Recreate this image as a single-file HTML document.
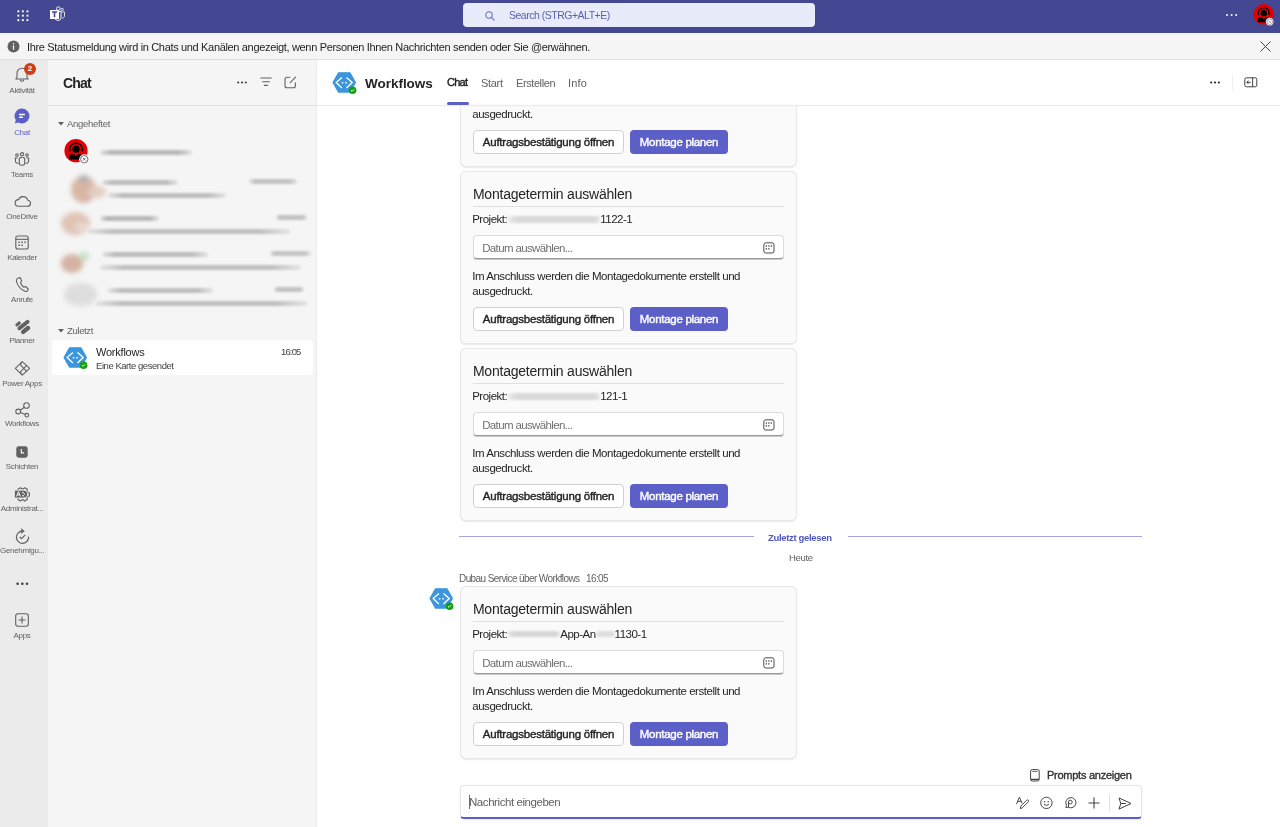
<!DOCTYPE html>
<html><head><meta charset="utf-8">
<style>
*{box-sizing:border-box;margin:0;padding:0}
html,body{width:1280px;height:827px;overflow:hidden;background:#fff;font-family:"Liberation Sans",sans-serif;color:#242424}
.t,.card,.lbl{will-change:transform}
.a{position:absolute}
#top{left:0;top:0;width:1280px;height:33px;background:#444791}
#search{left:463px;top:3px;width:352px;height:24px;background:#e8ebfa;border-radius:4px}
#banner{left:0;top:33px;width:1280px;height:27px;background:#f5f5f5;border-bottom:1px solid #e0e0e0}
#rail{left:0;top:60px;width:48px;height:767px;background:#ebebeb}
#list{left:48px;top:60px;width:269px;height:767px;background:#f5f5f5;border-right:1px solid #ebebeb;box-shadow:0.5px 0 1.5px rgba(0,0,0,0.05)}
#main{left:317px;top:60px;width:963px;height:767px;background:#fff}
.lbl{position:absolute;left:0;width:44px;text-align:center;font-size:8px;color:#616161;white-space:nowrap;letter-spacing:-0.3px}
.ri{position:absolute;left:12px;width:24px;height:24px}
.t{position:absolute;white-space:nowrap}
.card{position:absolute;left:460px;width:337px;background:#fafafa;border:1px solid #e8e8e8;border-radius:6px;box-shadow:0 0.6px 1.2px rgba(0,0,0,0.09)}
.card .ttl{position:absolute;left:11.9px;top:13.8px;font-size:14px;letter-spacing:-0.219px;color:#242424}
.card .sep{position:absolute;left:12px;right:12px;top:34px;height:1px;background:#e0e0e0}
.card .proj{position:absolute;left:11.2px;top:41.0px;font-size:11.5px;letter-spacing:-0.497px;color:#242424}
.card .inp{position:absolute;left:12px;right:12px;top:63px;height:24px;background:#fff;border:1px solid #dcdcdc;border-bottom:1px solid #9a9a9a;border-radius:4px;box-shadow:0 1px 0 #c8c8c8}
.card .inp span{position:absolute;left:8.2px;top:5.9px;font-size:11.5px;letter-spacing:-0.639px;color:#707070}
.card .desc{position:absolute;left:11.2px;top:97.2px;font-size:11.5px;line-height:15px;letter-spacing:-0.446px;color:#242424}
.card .b1{position:absolute;left:12px;top:134.8px;width:151px;height:24px;background:#fff;border:1px solid #d1d1d1;border-radius:4px;font-size:11.5px;font-weight:400;-webkit-text-stroke:0.4px #242424;letter-spacing:-0.224px;text-align:center;line-height:22px;color:#242424}
.card .b2{position:absolute;left:169px;top:134.8px;width:98px;height:24px;background:#5b5fc7;border-radius:4px;font-size:11.5px;font-weight:400;-webkit-text-stroke:0.4px #fff;letter-spacing:-0.297px;text-align:center;line-height:24px;color:#fff}
</style></head>
<body>
<div id="top" class="a">
<svg class="a" style="left:16.5px;top:9.8px" width="12" height="12" viewBox="0 0 12 12" fill="#fff"><rect x="0.4" y="0.4" width="1.9" height="1.9"/><rect x="4.9" y="0.4" width="1.9" height="1.9"/><rect x="9.5" y="0.4" width="1.9" height="1.9"/><rect x="0.4" y="4.7" width="1.9" height="1.9"/><rect x="4.9" y="4.7" width="1.9" height="1.9"/><rect x="9.5" y="4.7" width="1.9" height="1.9"/><rect x="0.4" y="9.2" width="1.9" height="1.9"/><rect x="4.9" y="9.2" width="1.9" height="1.9"/><rect x="9.5" y="9.2" width="1.9" height="1.9"/></svg>
<svg class="a" style="left:49px;top:6.2px" width="17" height="16" viewBox="0 0 17 16"><circle cx="9.3" cy="2.6" r="1.8" fill="none" stroke="#fff" stroke-width="0.9"/><circle cx="13.2" cy="3.5" r="1.2" fill="none" stroke="#fff" stroke-width="0.8"/><path d="M7.5 5.5h4.5v6a3 3 0 0 1-6 0" fill="none" stroke="#fff" stroke-width="0.9"/><path d="M12.5 6h3v4.2a2 2 0 0 1-3 1.5" fill="none" stroke="#fff" stroke-width="0.8"/><rect x="1" y="4" width="9" height="9" fill="#fff"/><path d="M3 6h5M5.5 6v5.2" stroke="#444791" stroke-width="1.6"/></svg>
<svg class="a" style="left:1224.5px;top:13px" width="14" height="4" viewBox="0 0 14 4" fill="#fff"><circle cx="2" cy="2" r="1"/><circle cx="6.6" cy="2" r="1"/><circle cx="11.2" cy="2" r="1"/></svg>
<svg class="a" style="left:1252.5px;top:4.2px" width="21.5" height="21.5" viewBox="0 0 24 24"><defs><clipPath id="cav2"><circle cx="12" cy="11.7" r="11.6"/></clipPath></defs><circle cx="12" cy="11.7" r="11.6" fill="#e30000"/><g clip-path="url(#cav2)"><circle cx="12" cy="10.2" r="3.6"/><path d="M5.6 10.6A6.4 6.4 0 0 1 18.4 10.6" fill="none" stroke="#000" stroke-width="1.3"/><ellipse cx="5.8" cy="10.8" rx="1.1" ry="1.8"/><ellipse cx="18.2" cy="10.8" rx="1.1" ry="1.8"/><path d="M5 20.4V17.6Q5 15.2 7.8 15.2H10.2L12 17.2 13.8 15.2H16.2Q19 15.2 19 17.6V20.4Z"/></g></svg>
<svg class="a" style="left:1264.5px;top:17px" width="9.5" height="9.5" viewBox="0 0 10.5 10.5"><circle cx="5.25" cy="5.25" r="5.1" fill="#444791"/><circle cx="5.25" cy="5.25" r="4.1" fill="#fff"/><circle cx="5.25" cy="5.25" r="3.1" fill="#fff" stroke="#8a8a8a" stroke-width="0.9"/><path d="M4.1 4.1l2.3 2.3M6.4 4.1l-2.3 2.3" stroke="#8a8a8a" stroke-width="0.9"/></svg>
</div>
<div id="search" class="a">
<svg class="a" style="left:22px;top:8px" width="10" height="10" viewBox="0 0 10 10"><circle cx="4" cy="4" r="3.2" fill="none" stroke="#6b6fc4" stroke-width="1.1"/><path d="M6.4 6.4L9.2 9.2" stroke="#6b6fc4" stroke-width="1.2" stroke-linecap="round"/></svg>
<div class="t" style="left:46px;top:6px;font-size:10.5px;letter-spacing:-0.494px;color:#5b5fae">Search (STRG+ALT+E)</div>
</div>
<div id="banner" class="a">
<svg class="a" style="left:7px;top:7px" width="13" height="13" viewBox="0 0 13 13"><circle cx="6.5" cy="6.5" r="6" fill="#616161"/><rect x="5.9" y="5.4" width="1.2" height="4.3" fill="#fff"/><circle cx="6.5" cy="3.8" r="0.75" fill="#fff"/></svg>
<div class="t" style="left:27px;top:8px;font-size:11px;letter-spacing:-0.335px;color:#242424">Ihre Statusmeldung wird in Chats und Kanälen angezeigt, wenn Personen Ihnen Nachrichten senden oder Sie @erwähnen.</div>
<svg class="a" style="left:1260px;top:8px" width="11" height="11" viewBox="0 0 11 11"><path d="M0.5 0.5l10 10M10.5 0.5l-10 10" stroke="#424242" stroke-width="1"/></svg>
</div>
<div id="rail" class="a">
<svg class="a" style="left:15px;top:7px" width="14" height="15" viewBox="0 0 14 15"><path d="M2 10.5V6.2a5 5 0 0 1 10 0v4.3l1.2 1.5H0.8z" fill="none" stroke="#616161" stroke-width="1.1" stroke-linejoin="round"/><path d="M5.2 12.4a1.8 1.8 0 0 0 3.6 0" fill="none" stroke="#616161" stroke-width="1.1"/></svg>
<div class="lbl" style="top:25.9px;color:#616161">Aktivität</div>
<svg class="a" style="left:14px;top:48px" width="16" height="16" viewBox="0 0 16 16"><path d="M8 0.5a7.5 7.5 0 1 1-3.6 14.1L0.8 15.5l1-3.4A7.5 7.5 0 0 1 8 0.5z" fill="#5b5fc7"/><rect x="5" y="5.8" width="6" height="1.4" rx="0.5" fill="#fff"/><rect x="5" y="8.6" width="4" height="1.4" rx="0.5" fill="#fff"/></svg>
<div class="lbl" style="top:68.0px;color:#5b5fc7">Chat</div>
<svg class="a" style="left:14px;top:92px" width="16" height="14" viewBox="0 0 16 14" fill="none" stroke="#616161" stroke-width="1.1"><circle cx="8" cy="2.2" r="1.6"/><circle cx="3" cy="3" r="1.3"/><circle cx="13" cy="3" r="1.3"/><rect x="5.3" y="5.3" width="5.4" height="8" rx="2.2"/><path d="M3.8 6H1.4v3a2.3 2.3 0 0 0 3 2.2"/><path d="M12.2 6h2.4v3a2.3 2.3 0 0 1-3 2.2"/></svg>
<div class="lbl" style="top:110.0px;color:#616161">Teams</div>
<svg class="a" style="left:14px;top:135px" width="17" height="12" viewBox="0 0 17 12"><path d="M4.3 11.2h9a3 3 0 0 0 0.4-6A4.8 4.8 0 0 0 4.6 4.6 3.3 3.3 0 0 0 4.3 11.2z" fill="none" stroke="#616161" stroke-width="1.1" stroke-linejoin="round"/></svg>
<div class="lbl" style="top:151.5px;color:#616161">OneDrive</div>
<svg class="a" style="left:15px;top:175px" width="14" height="15" viewBox="0 0 14 15"><rect x="0.8" y="1" width="12.4" height="13" rx="2" fill="none" stroke="#616161" stroke-width="1.1"/><path d="M0.8 4.3h12.4" stroke="#616161" stroke-width="1.1"/><g fill="#616161"><rect x="3.3" y="6.5" width="1.5" height="1.5"/><rect x="6.3" y="6.5" width="1.5" height="1.5"/><rect x="9.3" y="6.5" width="1.5" height="1.5"/><rect x="3.3" y="9.5" width="1.5" height="1.5"/><rect x="6.3" y="9.5" width="1.5" height="1.5"/></g></svg>
<div class="lbl" style="top:192.9px;color:#616161">Kalender</div>
<svg class="a" style="left:15px;top:217px" width="14" height="15" viewBox="0 0 14 15"><path d="M3.3 1l1.8-0.4 1.6 3.4-1.2 1.5c0.6 1.8 1.8 3.6 3.4 4.8l1.7-0.9 2.6 2.6-0.6 1.6c-0.4 0.7-1.4 1.1-2.3 0.8C5.8 13 2.1 8.2 1.4 4 1.3 2.6 2.1 1.4 3.3 1z" fill="none" stroke="#616161" stroke-width="1.1" stroke-linejoin="round"/></svg>
<div class="lbl" style="top:235.0px;color:#616161">Anrufe</div>
<svg class="a" style="left:12px;top:256px" width="22" height="22" viewBox="0 0 22 22" stroke="#616161" stroke-linecap="round" fill="none"><path d="M4.9 8.9L7.3 6.9" stroke-width="3.1"/><path d="M7.4 12.3L15.6 5.7" stroke-width="3.9"/><path d="M11.2 15.9L16 12" stroke-width="4.4"/></svg>
<div class="lbl" style="top:276.3px;color:#616161">Planner</div>
<svg class="a" style="left:12px;top:298px" width="22" height="22" viewBox="0 0 22 22" fill="none" stroke="#616161" stroke-width="1.1" stroke-linejoin="round"><path d="M3.3 10.4L10.3 3.6 17.6 10.4 10.3 17.2z"/><path d="M9.6 3.9L8.6 7.2 14.9 13.6M9.6 16.9L8.6 13.6 14.9 7.2"/></svg>
<div class="lbl" style="top:318.6px;color:#616161">Power Apps</div>
<svg class="a" style="left:15px;top:342px" width="16" height="16" viewBox="0 0 16 16" fill="none" stroke="#616161" stroke-width="1.1"><circle cx="11.5" cy="3.5" r="2.8"/><circle cx="3.2" cy="9.5" r="2.4"/><circle cx="11.8" cy="13.2" r="1.8"/><path d="M5.4 8.2L9.2 5.2M5.5 10.5l4.6 2"/></svg>
<div class="lbl" style="top:359.2px;color:#616161">Workflows</div>
<svg class="a" style="left:16px;top:386px" width="12" height="12" viewBox="0 0 12 12"><rect x="0.3" y="0.3" width="11.4" height="11.4" rx="2.4" fill="#616161"/><path d="M5.3 3v3.8h2.8" fill="none" stroke="#fff" stroke-width="1.2"/></svg>
<div class="lbl" style="top:402.0px;color:#616161">Schichten</div>
<svg class="a" style="left:12px;top:424px" width="22" height="22" viewBox="0 0 22 22"><path d="M15.86 12.32 L17.42 11.97 L17.42 8.83 L15.86 8.48 L14.89 6.80 L15.37 5.28 L12.65 3.71 L11.57 4.89 L9.63 4.89 L8.55 3.71 L5.83 5.28 L6.31 6.80 L5.34 8.48 L3.78 8.83 L3.78 11.97 L5.34 12.32 L6.31 14.00 L5.83 15.52 L8.55 17.09 L9.63 15.91 L11.57 15.91 L12.65 17.09 L15.37 15.52 L14.89 14.00Z" fill="none" stroke="#616161" stroke-width="1.1" stroke-linejoin="round"/><path d="M2.4 6.2h9.4a3.9 3.9 0 0 1 0 7.8H2.4z" fill="#616161" stroke="#ebebeb" stroke-width="0.9"/><path d="M4.6 12.4L6.5 7.6 8.4 12.4M5.3 10.9h2.4" fill="none" stroke="#fff" stroke-width="1"/><rect x="10.3" y="8" width="1.4" height="1.4" fill="#fff"/><rect x="10.3" y="11" width="1.4" height="1.4" fill="#fff"/><rect x="11.9" y="9.5" width="1" height="1.3" fill="#fff"/></svg>
<div class="lbl" style="top:444.3px;color:#616161">Administrat...</div>
<svg class="a" style="left:12px;top:465px" width="22" height="22" viewBox="0 0 22 22" fill="none" stroke="#616161" stroke-width="1.2" stroke-linecap="round" stroke-linejoin="round"><path d="M10.2 6.1A6.1 6.1 0 1 0 16.6 12.2"/><path d="M9.6 3.9L12.3 6.1 9.6 8.3z" fill="#616161" stroke-width="0.6"/><path d="M8.1 12.2l1.5 1.4 3.2-3.3"/></svg>
<div class="lbl" style="top:485.8px;color:#616161">Genehmigu...</div>
<svg class="a" style="left:16px;top:522px" width="13" height="4" viewBox="0 0 13 4" fill="#424242"><circle cx="1.6" cy="1.8" r="1.3"/><circle cx="6.3" cy="1.8" r="1.3"/><circle cx="11" cy="1.8" r="1.3"/></svg>
<svg class="a" style="left:15px;top:553px" width="14" height="14" viewBox="0 0 14 14" fill="none" stroke="#616161" stroke-width="1.1"><rect x="0.7" y="0.7" width="12.6" height="12.6" rx="2.2"/><path d="M7 3.6v6.8M3.6 7h6.8"/></svg>
<div class="lbl" style="top:570.6px">Apps</div>
<div class="a" style="left:24px;top:3px;width:12px;height:12px;border-radius:50%;background:#d13d12;color:#fff;font-size:8px;font-weight:700;text-align:center;line-height:12px">2</div>
</div>
<div id="list" class="a">
<div class="t" style="left:15px;top:15px;font-size:14px;font-weight:700;letter-spacing:-0.836px;color:#242424">Chat</div>
<svg class="a" style="left:189px;top:21px" width="10" height="3" viewBox="0 0 10 3" fill="#424242"><circle cx="1.2" cy="1.5" r="1.1"/><circle cx="5" cy="1.5" r="1.1"/><circle cx="8.8" cy="1.5" r="1.1"/></svg>
<svg class="a" style="left:212px;top:17px" width="12" height="10" viewBox="0 0 12 10" stroke="#616161" stroke-width="1.1" stroke-linecap="round"><path d="M0.8 1h10.4M2.6 4.7h6.8M4.4 8.4h3.2"/></svg>
<svg class="a" style="left:236px;top:16px" width="13" height="13" viewBox="0 0 13 13" fill="none" stroke="#616161" stroke-width="1.1" stroke-linecap="round" stroke-linejoin="round"><path d="M6 1.3H3A2 2 0 0 0 1 3.3v6.4a2 2 0 0 0 2 2h6.4a2 2 0 0 0 2-2V6.8"/><path d="M11.6 1.2L6.2 6.6"/></svg>
<div class="a" style="left:0;top:45px;width:268px;height:1px;background:#e0e0e0"></div>
<svg class="a" style="left:9.5px;top:62px" width="6" height="4" viewBox="0 0 6 4"><path d="M0 0h6L3 3.5z" fill="#616161"/></svg>
<div class="t" style="left:19px;top:57.5px;font-size:9.5px;letter-spacing:-0.296px;color:#616161">Angeheftet</div>
<svg class="a" style="left:15.5px;top:79px" width="24" height="24" viewBox="0 0 24 24"><defs><clipPath id="cav"><circle cx="12" cy="11.7" r="11.6"/></clipPath></defs><circle cx="12" cy="11.7" r="11.6" fill="#e30000"/><g clip-path="url(#cav)"><circle cx="12" cy="10.2" r="3.6"/><path d="M5.6 10.6A6.4 6.4 0 0 1 18.4 10.6" fill="none" stroke="#000" stroke-width="1.3"/><ellipse cx="5.8" cy="10.8" rx="1.1" ry="1.8"/><ellipse cx="18.2" cy="10.8" rx="1.1" ry="1.8"/><path d="M5 20.4V17.6Q5 15.2 7.8 15.2H10.2L12 17.2 13.8 15.2H16.2Q19 15.2 19 17.6V20.4Z"/></g></svg>
<svg class="a" style="left:30.5px;top:93.8px" width="10.5" height="10.5" viewBox="0 0 10.5 10.5"><circle cx="5.25" cy="5.25" r="5.1" fill="#f5f5f5"/><circle cx="5.25" cy="5.25" r="3.7" fill="#fff" stroke="#6a6a6a" stroke-width="0.95"/><path d="M3.9 3.9l2.7 2.7M6.6 3.9l-2.7 2.7" stroke="#6a6a6a" stroke-width="0.95"/></svg>
<div class="a" style="left:0;top:0;width:269px;height:767px;filter:blur(2.6px)">
<div class="a" style="left:23px;top:116px;width:25px;height:27px;border-radius:50%;background:#d8b6a5"></div>
<div class="a" style="left:40px;top:126px;width:18px;height:12px;border-radius:50%;background:#e3cdc2"></div>
<div class="a" style="left:31px;top:115px;width:9px;height:7px;border-radius:50%;background:#a9aeb3"></div>
<div class="a" style="left:13px;top:152px;width:29px;height:23px;border-radius:50%;background:#dfc4b6"></div>
<div class="a" style="left:27px;top:162px;width:14px;height:10px;border-radius:50%;background:#e8d8cf"></div>
<div class="a" style="left:13px;top:194px;width:22px;height:19px;border-radius:50%;background:#d4b3a4"></div>
<div class="a" style="left:31px;top:192px;width:10px;height:9px;border-radius:50%;background:#c6e2c6"></div>
<div class="a" style="left:16px;top:223px;width:33px;height:23px;border-radius:50%;background:#dddddd"></div>
</div>
<div class="a" style="left:0;top:0;width:269px;height:767px;filter:blur(1.1px)">
<div class="a" style="left:52px;top:89.5px;width:92px;height:5px;border-radius:2.5px;background:linear-gradient(90deg,rgba(190,190,190,0.3),#b8b8b8 12%,#b8b8b8 85%,rgba(190,190,190,0.3))"></div>
<div class="a" style="left:54px;top:119.5px;width:76px;height:5px;border-radius:2.5px;background:linear-gradient(90deg,rgba(190,190,190,0.3),#bdbdbd 12%,#bdbdbd 85%,rgba(190,190,190,0.3))"></div>
<div class="a" style="left:201px;top:118.5px;width:48px;height:5px;border-radius:2.5px;background:linear-gradient(90deg,rgba(190,190,190,0.3),#c2c2c2 12%,#c2c2c2 85%,rgba(190,190,190,0.3))"></div>
<div class="a" style="left:60px;top:132.5px;width:118px;height:5px;border-radius:2.5px;background:linear-gradient(90deg,rgba(190,190,190,0.3),#bdbdbd 12%,#bdbdbd 85%,rgba(190,190,190,0.3))"></div>
<div class="a" style="left:52px;top:155.5px;width:59px;height:5px;border-radius:2.5px;background:linear-gradient(90deg,rgba(190,190,190,0.3),#b8b8b8 12%,#b8b8b8 85%,rgba(190,190,190,0.3))"></div>
<div class="a" style="left:228px;top:154.5px;width:31px;height:5px;border-radius:2.5px;background:linear-gradient(90deg,rgba(190,190,190,0.3),#c2c2c2 12%,#c2c2c2 85%,rgba(190,190,190,0.3))"></div>
<div class="a" style="left:40px;top:168.5px;width:202px;height:5px;border-radius:2.5px;background:linear-gradient(90deg,rgba(190,190,190,0.3),#bfbfbf 12%,#bfbfbf 85%,rgba(190,190,190,0.3))"></div>
<div class="a" style="left:54px;top:191.5px;width:106px;height:5px;border-radius:2.5px;background:linear-gradient(90deg,rgba(190,190,190,0.3),#bcbcbc 12%,#bcbcbc 85%,rgba(190,190,190,0.3))"></div>
<div class="a" style="left:222px;top:190.5px;width:41px;height:5px;border-radius:2.5px;background:linear-gradient(90deg,rgba(190,190,190,0.3),#c4c4c4 12%,#c4c4c4 85%,rgba(190,190,190,0.3))"></div>
<div class="a" style="left:52px;top:204.5px;width:201px;height:5px;border-radius:2.5px;background:linear-gradient(90deg,rgba(190,190,190,0.3),#bfbfbf 12%,#bfbfbf 85%,rgba(190,190,190,0.3))"></div>
<div class="a" style="left:60px;top:227.5px;width:105px;height:5px;border-radius:2.5px;background:linear-gradient(90deg,rgba(190,190,190,0.3),#bdbdbd 12%,#bdbdbd 85%,rgba(190,190,190,0.3))"></div>
<div class="a" style="left:226px;top:226.5px;width:30px;height:5px;border-radius:2.5px;background:linear-gradient(90deg,rgba(190,190,190,0.3),#c2c2c2 12%,#c2c2c2 85%,rgba(190,190,190,0.3))"></div>
<div class="a" style="left:48px;top:240.5px;width:211px;height:5px;border-radius:2.5px;background:linear-gradient(90deg,rgba(190,190,190,0.3),#bfbfbf 12%,#bfbfbf 85%,rgba(190,190,190,0.3))"></div>
</div>
<svg class="a" style="left:9.5px;top:268.5px" width="6" height="4" viewBox="0 0 6 4"><path d="M0 0h6L3 3.5z" fill="#616161"/></svg>
<div class="t" style="left:19px;top:264.6px;font-size:9.5px;letter-spacing:-0.349px;color:#616161">Zuletzt</div>
<div class="a" style="left:4px;top:280px;width:261px;height:35px;background:#fff;border-radius:4px"></div>
<svg class="a" style="left:15.15px;top:285.80px" width="27" height="25" viewBox="0 0 27 25"><path d="M1.1 11.45L6.6 1.8H17.9L23.4 11.45 17.9 21.1H6.6Z" fill="#3a96dd" stroke="#3a96dd" stroke-width="1.3" stroke-linejoin="round"/><path d="M9.9 6.4L4.2 11.6 9.9 16.9M14.5 6.4L20.2 11.6 14.5 16.9" fill="none" stroke="#fff" stroke-width="1.35"/><rect x="9.8" y="11.0" width="1.5" height="1.5" fill="#fff"/><rect x="13.3" y="11.0" width="1.5" height="1.5" fill="#fff"/><circle cx="20.6" cy="19.2" r="3.8" fill="#13a10e"/><path d="M19 19.3l1.1 1 2-2" fill="none" stroke="#fff" stroke-width="0.9"/></svg>
<div class="t" style="left:48px;top:286.0px;font-size:11px;letter-spacing:-0.225px;color:#242424">Workflows</div>
<div class="t" style="left:48px;top:300px;font-size:9.5px;letter-spacing:-0.451px;color:#424242">Eine Karte gesendet</div>
<div class="t" style="left:232.5px;top:286.0px;font-size:9.5px;letter-spacing:-0.85px;color:#424242">16:05</div>
</div>
<div id="main" class="a"></div>
<div class="a" style="left:317px;top:106px;width:963px;height:721px;overflow:hidden"><div class="a" style="left:-317px;top:-106px;width:1280px;height:827px">
<div class="card" style="top:-6px;height:172.6px">
<div class="desc">Im Anschluss werden die Montagedokumente erstellt und<br>ausgedruckt.</div>
<div class="b1">Auftragsbestätigung öffnen</div>
<div class="b2">Montage planen</div>
</div>
<div class="card" style="top:171px;height:172.6px">
<div class="ttl">Montagetermin auswählen</div>
<div class="sep"></div>
<div class="proj">Projekt:<span style="display:inline-block;width:93px;height:7px;vertical-align:middle;margin-top:-1px;background:linear-gradient(90deg,rgba(215,215,215,0.3),#d8d8d8 12%,#d8d8d8 92%,rgba(215,215,215,0.6));filter:blur(1.3px);border-radius:3px"></span>1122-1</div>
<div class="inp"><span>Datum auswählen...</span><svg class="a" style="left:289px;top:5.5px" width="12" height="12" viewBox="0 0 12 12" fill="none" stroke="#424242" stroke-width="0.95"><rect x="0.8" y="0.8" width="10.2" height="10.2" rx="2"/><g fill="#424242" stroke="none"><rect x="2.7" y="3.4" width="1.3" height="1.3"/><rect x="5.2" y="3.4" width="1.3" height="1.3"/><rect x="7.7" y="3.4" width="1.3" height="1.3"/><rect x="2.7" y="6.2" width="1.3" height="1.3"/><rect x="5.2" y="6.2" width="1.3" height="1.3"/></g></svg></div>
<div class="desc">Im Anschluss werden die Montagedokumente erstellt und<br>ausgedruckt.</div>
<div class="b1">Auftragsbestätigung öffnen</div>
<div class="b2">Montage planen</div>
</div>
<div class="card" style="top:348px;height:172.6px">
<div class="ttl">Montagetermin auswählen</div>
<div class="sep"></div>
<div class="proj">Projekt:<span style="display:inline-block;width:93px;height:7px;vertical-align:middle;margin-top:-1px;background:linear-gradient(90deg,rgba(215,215,215,0.3),#d8d8d8 12%,#d8d8d8 92%,rgba(215,215,215,0.6));filter:blur(1.3px);border-radius:3px"></span>121-1</div>
<div class="inp"><span>Datum auswählen...</span><svg class="a" style="left:289px;top:5.5px" width="12" height="12" viewBox="0 0 12 12" fill="none" stroke="#424242" stroke-width="0.95"><rect x="0.8" y="0.8" width="10.2" height="10.2" rx="2"/><g fill="#424242" stroke="none"><rect x="2.7" y="3.4" width="1.3" height="1.3"/><rect x="5.2" y="3.4" width="1.3" height="1.3"/><rect x="7.7" y="3.4" width="1.3" height="1.3"/><rect x="2.7" y="6.2" width="1.3" height="1.3"/><rect x="5.2" y="6.2" width="1.3" height="1.3"/></g></svg></div>
<div class="desc">Im Anschluss werden die Montagedokumente erstellt und<br>ausgedruckt.</div>
<div class="b1">Auftragsbestätigung öffnen</div>
<div class="b2">Montage planen</div>
</div>
<div class="a" style="left:459px;top:535.6px;width:295px;height:1.6px;background:#a3a6e2"></div>
<div class="a" style="left:848px;top:535.6px;width:294px;height:1.6px;background:#a3a6e2"></div>
<div class="t" style="left:768px;top:531.50px;font-size:9.5px;font-weight:700;letter-spacing:-0.332px;color:#5057bf">Zuletzt gelesen</div>
<div class="t" style="left:788.5px;top:552px;font-size:9.5px;letter-spacing:-0.325px;color:#616161">Heute</div>
<div class="t" style="left:458.5px;top:573px;font-size:10px;letter-spacing:-0.595px;color:#616161">Dubau Service über Workflows&nbsp;&nbsp;&nbsp;16:05</div>
<svg class="a" style="left:428.85px;top:587.30px" width="27" height="25" viewBox="0 0 27 25"><path d="M1.1 11.45L6.6 1.8H17.9L23.4 11.45 17.9 21.1H6.6Z" fill="#3a96dd" stroke="#3a96dd" stroke-width="1.3" stroke-linejoin="round"/><path d="M9.9 6.4L4.2 11.6 9.9 16.9M14.5 6.4L20.2 11.6 14.5 16.9" fill="none" stroke="#fff" stroke-width="1.35"/><rect x="9.8" y="11.0" width="1.5" height="1.5" fill="#fff"/><rect x="13.3" y="11.0" width="1.5" height="1.5" fill="#fff"/><circle cx="20.6" cy="19.2" r="3.8" fill="#13a10e"/><path d="M19 19.3l1.1 1 2-2" fill="none" stroke="#fff" stroke-width="0.9"/></svg>
<div class="card" style="top:586.4px;height:172.6px">
<div class="ttl">Montagetermin auswählen</div>
<div class="sep"></div>
<div class="proj">Projekt:<span style="display:inline-block;width:53px;height:6px;vertical-align:middle;margin-top:-1px;background:linear-gradient(90deg,rgba(215,215,215,0.3),#d6d6d6 12%,#d6d6d6 92%,rgba(215,215,215,0.6));filter:blur(1.3px);border-radius:3px"></span>App-An<span style="display:inline-block;width:19px;height:6px;vertical-align:middle;margin-top:-1px;background:linear-gradient(90deg,rgba(215,215,215,0.3),#dddddd 12%,#dddddd 92%,rgba(215,215,215,0.6));filter:blur(1.3px);border-radius:3px"></span>1130-1</div>
<div class="inp"><span>Datum auswählen...</span><svg class="a" style="left:289px;top:5.5px" width="12" height="12" viewBox="0 0 12 12" fill="none" stroke="#424242" stroke-width="0.95"><rect x="0.8" y="0.8" width="10.2" height="10.2" rx="2"/><g fill="#424242" stroke="none"><rect x="2.7" y="3.4" width="1.3" height="1.3"/><rect x="5.2" y="3.4" width="1.3" height="1.3"/><rect x="7.7" y="3.4" width="1.3" height="1.3"/><rect x="2.7" y="6.2" width="1.3" height="1.3"/><rect x="5.2" y="6.2" width="1.3" height="1.3"/></g></svg></div>
<div class="desc">Im Anschluss werden die Montagedokumente erstellt und<br>ausgedruckt.</div>
<div class="b1">Auftragsbestätigung öffnen</div>
<div class="b2">Montage planen</div>
</div>
</div></div>
<div class="t" style="left:365px;top:75.6px;font-size:13.5px;font-weight:700;letter-spacing:-0.025px;color:#242424">Workflows</div>
<svg class="a" style="left:332.00px;top:71.00px" width="27" height="25" viewBox="0 0 27 25"><path d="M1.1 11.45L6.6 1.8H17.9L23.4 11.45 17.9 21.1H6.6Z" fill="#3a96dd" stroke="#3a96dd" stroke-width="1.3" stroke-linejoin="round"/><path d="M9.9 6.4L4.2 11.6 9.9 16.9M14.5 6.4L20.2 11.6 14.5 16.9" fill="none" stroke="#fff" stroke-width="1.35"/><rect x="9.8" y="11.0" width="1.5" height="1.5" fill="#fff"/><rect x="13.3" y="11.0" width="1.5" height="1.5" fill="#fff"/><circle cx="20.6" cy="19.2" r="3.8" fill="#13a10e"/><path d="M19 19.3l1.1 1 2-2" fill="none" stroke="#fff" stroke-width="0.9"/></svg>
<div class="t" style="left:447px;top:75.6px;font-size:11px;font-weight:400;-webkit-text-stroke:0.4px #242424;letter-spacing:-0.768px;color:#242424">Chat</div>
<div class="t" style="left:481px;top:76.6px;font-size:11px;letter-spacing:-0.3px;color:#616161">Start</div>
<div class="t" style="left:516px;top:76.6px;font-size:11px;letter-spacing:-0.412px;color:#616161">Erstellen</div>
<div class="t" style="left:568px;top:76.6px;font-size:11px;letter-spacing:0.133px;color:#616161">Info</div>
<div class="a" style="left:447px;top:102px;width:22px;height:3px;border-radius:1.5px;background:#5b5fc7"></div>
<div class="a" style="left:317px;top:105px;width:963px;height:1px;background:#ebebeb;box-shadow:0 0 1.5px rgba(0,0,0,0.06)"></div>
<svg class="a" style="left:1210px;top:81px" width="10" height="3" viewBox="0 0 10 3" fill="#242424"><circle cx="1.2" cy="1.5" r="1.1"/><circle cx="5" cy="1.5" r="1.1"/><circle cx="8.8" cy="1.5" r="1.1"/></svg>
<div class="a" style="left:1232px;top:74px;width:1px;height:17px;background:#f0f0f0"></div>
<svg class="a" style="left:1244px;top:77px" width="14" height="11" viewBox="0 0 14 11" fill="none" stroke="#424242" stroke-width="1"><rect x="0.8" y="0.8" width="12" height="9" rx="1.6"/><path d="M8.6 0.8v9"/><path d="M6.8 5.3H2.8M4.5 3.6L2.8 5.3 4.5 7"/></svg>
<svg class="a" style="left:1029.5px;top:769px" width="10" height="13" viewBox="0 0 10 13" fill="none" stroke="#424242" stroke-width="1"><rect x="0.6" y="0.6" width="8.6" height="11.4" rx="1.6"/><path d="M2.2 2.4h5.4" stroke-width="0.8"/><path d="M0.8 10.4h8.2" stroke-width="1.3"/></svg>
<div class="t" style="left:1047px;top:769.1px;font-size:11px;font-weight:400;-webkit-text-stroke:0.35px #303030;letter-spacing:-0.257px;color:#303030">Prompts anzeigen</div>
<div class="a" style="left:459.5px;top:785px;width:682px;height:33.5px;background:#fff;border:1px solid #e6e6e6;border-bottom:2px solid #5b5fc7;border-radius:4px;box-shadow:0 1px 2px rgba(0,0,0,0.08)"></div>
<div class="a" style="left:469px;top:794.5px;width:1px;height:14px;background:#707070"></div>
<div class="t" style="left:468.9px;top:796px;font-size:11.5px;letter-spacing:-0.434px;color:#616161">Nachricht eingeben</div>
<svg class="a" style="left:1012px;top:792px" width="22" height="22" viewBox="0 0 22 22" fill="none" stroke="#424242" stroke-width="0.95" stroke-linejoin="round" stroke-linecap="round"><path d="M4.6 11.8L7.4 5.2 10 11"/><path d="M5.6 9.3h3.2"/><path d="M8.4 16.3l0.4-2.2 5.9-5.9a1 1 0 0 1 1.6 1.6l-5.9 5.9z"/></svg>
<svg class="a" style="left:1038px;top:794px" width="18" height="18" viewBox="0 0 18 18" fill="none" stroke="#424242" stroke-width="0.95"><circle cx="8.4" cy="8.9" r="5.7"/><path d="M6.2 10.6q2.2 1.8 4.4 0" stroke-linecap="round"/><circle cx="6.6" cy="7.8" r="0.75" fill="#424242" stroke="none"/><circle cx="10.2" cy="7.8" r="0.75" fill="#424242" stroke="none"/></svg>
<svg class="a" style="left:1062px;top:794px" width="18" height="18" viewBox="0 0 18 18" fill="none" stroke="#424242" stroke-width="0.95" stroke-linejoin="round"><path d="M3.9 13.6l0.6-2.3A5.1 5.1 0 1 1 6.3 13.1z"/><circle cx="8.3" cy="8.1" r="1.9"/><path d="M6.5 8.3v5"/></svg>
<svg class="a" style="left:1088px;top:797px" width="12" height="12" viewBox="0 0 12 12" stroke="#424242" stroke-width="1.1"><path d="M6 0.5v11M0.5 6h11"/></svg>
<div class="a" style="left:1109px;top:794px;width:1px;height:17px;background:#e0e0e0"></div>
<svg class="a" style="left:1118px;top:797px" width="14" height="13" viewBox="0 0 14 13" fill="none" stroke="#424242" stroke-width="1" stroke-linejoin="round"><path d="M1 0.9l12 5.6-12 5.6 1.8-5.6z"/><path d="M2.8 6.5h5"/></svg>
</body></html>
